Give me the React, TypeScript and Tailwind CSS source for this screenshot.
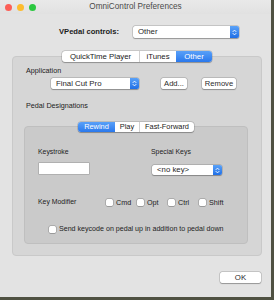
import React from "react";

const Stepper = () => (
  <div className="w-[9px] h-full rounded-r-[2px] bg-gradient-to-b from-[#5aa2f8] to-[#1f6fe6] flex items-center justify-center">
    <svg width="5" height="7" viewBox="0 0 5 7" fill="none" stroke="white" strokeWidth="0.9" strokeLinecap="round" strokeLinejoin="round">
      <path d="M1 2.6 L2.5 1.1 L4 2.6" />
      <path d="M1 4.4 L2.5 5.9 L4 4.4" />
    </svg>
  </div>
);

function Popup({ label, className }: { label: string; className: string }) {
  return (
    <div className={`flex bg-white rounded-[2px] shadow-[0_0_0_0.5px_rgba(0,0,0,0.22),0_0.5px_1px_rgba(0,0,0,0.25)] ${className}`}>
      <div className="flex-1 pl-[5px] flex items-center text-[7.8px] text-[#1e1e1e] leading-none">{label}</div>
      <Stepper />
    </div>
  );
}

function Button({ label, className }: { label: string; className: string }) {
  return (
    <div className={`flex items-center justify-center bg-white rounded-[2px] shadow-[0_0_0_0.5px_rgba(0,0,0,0.22),0_0.5px_1px_rgba(0,0,0,0.25)] text-[7.6px] text-[#2a2a2a] leading-none ${className}`}>
      {label}
    </div>
  );
}

function Segments({ items, selected, className }: { items: { label: string; w: string }[]; selected: number; className: string }) {
  return (
    <div className={`relative z-10 flex bg-white rounded-[3px] shadow-[0_0_0_0.5px_rgba(0,0,0,0.2),0_0.5px_1px_rgba(0,0,0,0.25)] overflow-hidden ${className}`}>
      {items.map((it, i) => (
        <div
          key={it.label}
          className={`${it.w} flex items-center justify-center leading-none ${
            i === selected ? "bg-gradient-to-b from-[#59a0f8] to-[#2a78ec] text-white" : "text-[#1a1a1a]"
          } ${i > 0 && i !== selected && i - 1 !== selected ? "border-l border-[#d0d0d0]" : ""}`}
        >
          {it.label}
        </div>
      ))}
    </div>
  );
}

const Check = () => (
  <div className="w-[7px] h-[7px] bg-white rounded-[1.5px] shadow-[0_0_0_0.5px_rgba(0,0,0,0.3),0_0.5px_0.5px_rgba(0,0,0,0.2)]" />
);

function Modifier({ label }: { label: string }) {
  return (
    <div className="w-[31px] flex items-center">
      <Check />
      <span className="ml-[3px]">{label}</span>
    </div>
  );
}

export default function App() {
  return (
    <div className="w-[274px] h-[300px] bg-[#4f5142] overflow-hidden font-['Liberation_Sans',Arial,sans-serif]">
      <div className="w-[271px] h-[297px] bg-[#e3e3e3] rounded-t-[4px] flex flex-col">
        <div className="h-[14px] grid grid-cols-[1fr_auto_1fr] items-center bg-gradient-to-b from-[#e9e9e9] to-[#e1e1e1]">
          <div className="flex gap-[5px] pl-[5px]">
            <div className="w-[7px] h-[7px] rounded-full bg-[#fc5f57]" />
            <div className="w-[7px] h-[7px] rounded-full bg-[#fdbc2e]" />
            <div className="w-[7px] h-[7px] rounded-full bg-[#2bc840]" />
          </div>
          <div className="text-[8.2px] text-[#4a4a4a] leading-none">OmniControl Preferences</div>
          <div />
        </div>

        <div className="mt-[12px] h-[12px] flex items-center pl-[59px]">
          <div className="w-[74px] text-[7.6px] font-bold text-[#1c1c1c] leading-none">VPedal controls:</div>
          <Popup label="Other" className="w-[106px] h-[12px]" />
        </div>

        <div className="mt-[13px] ml-[12px] w-[250px] flex flex-col items-center">
          <Segments
            className="h-[11px] text-[7.8px]"
            selected={2}
            items={[
              { label: "QuickTime Player", w: "w-[77px]" },
              { label: "iTunes", w: "w-[37px]" },
              { label: "Other", w: "w-[36px]" },
            ]}
          />
          <div className="-mt-[6px] w-[250px] h-[200px] bg-[#d6d6d6] rounded-[4px] border border-[#c9c9c9] px-[11px] pt-[9px] text-[7.2px] text-[#222] leading-none">
            <div className="pl-[2px] h-[9px] flex items-center">Application</div>
            <div className="mt-[3px] h-[11px] flex items-center pl-[27px]">
              <Popup label="Final Cut Pro" className="w-[88px] h-[11px]" />
              <Button label="Add..." className="ml-[22px] w-[26px] h-[11px]" />
              <Button label="Remove" className="ml-[15px] w-[34px] h-[11px]" />
            </div>
            <div className="mt-[12px] pl-[2px] h-[9px] flex items-center">Pedal Designations</div>
            <div className="mt-[12px] w-[224px] flex flex-col items-center">
              <Segments
                className="h-[10px] text-[7.4px]"
                selected={0}
                items={[
                  { label: "Rewind", w: "w-[37px]" },
                  { label: "Play", w: "w-[24px]" },
                  { label: "Fast-Forward", w: "w-[55px]" },
                ]}
              />
              <div className="-mt-[6px] w-[224px] h-[118px] bg-[#cacaca] rounded-[4px] border border-[#bfbfbf] pt-[21px] pl-[13px] text-[6.9px]">
                <div className="flex h-[9px] items-center">
                  <div className="w-[113px]">Keystroke</div>
                  <div>Special Keys</div>
                </div>
                <div className="mt-[6px] flex items-start">
                  <div className="ml-[1px] w-[50px] h-[11px] bg-white shadow-[0_0_0_0.5px_rgba(0,0,0,0.25)]" />
                  <Popup label="<no key>" className="ml-[63px] mt-[2px] w-[70px] h-[10px]" />
                </div>
                <div className="mt-[23px] h-[9px] flex items-center">
                  <div className="w-[68px]">Key Modifier</div>
                  <div className="flex text-[7.2px]">
                    <Modifier label="Cmd" />
                    <Modifier label="Opt" />
                    <Modifier label="Ctrl" />
                    <Modifier label="Shift" />
                  </div>
                </div>
                <div className="mt-[18px] h-[9px] flex items-center pl-[11px] text-[7.1px]">
                  <Check />
                  <span className="ml-[3px]">Send keycode on pedal up in addition to pedal down</span>
                </div>
              </div>
            </div>
          </div>
        </div>

        <div className="mt-[16px] ml-[220px] flex">
          <Button label="OK" className="w-[41px] h-[11px] text-[7.8px]" />
        </div>
      </div>
    </div>
  );
}
